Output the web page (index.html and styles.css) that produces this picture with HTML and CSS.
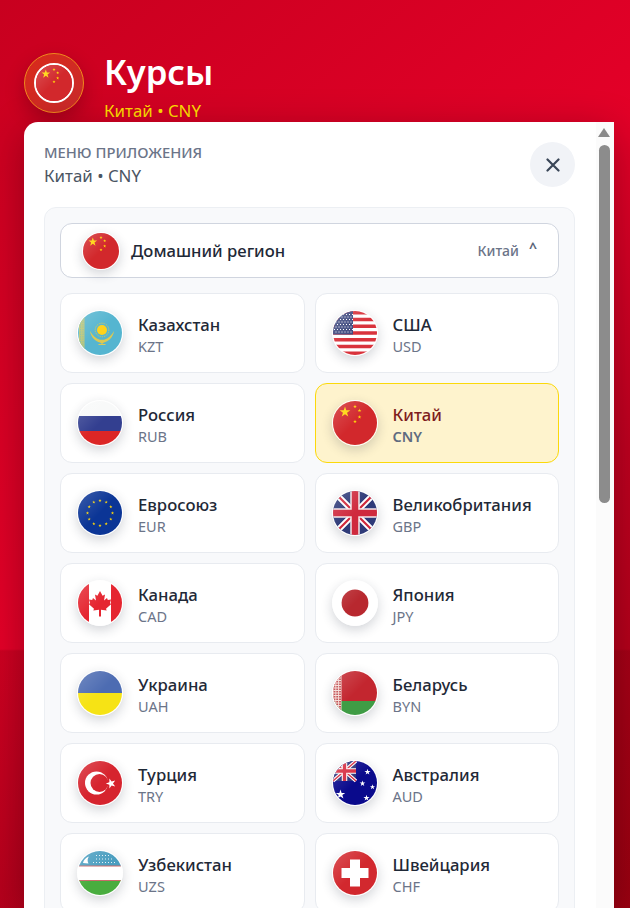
FILE: index.html
```html
<!DOCTYPE html>
<html lang="ru">
<head>
<meta charset="utf-8">
<title>Курсы</title>
<link rel="stylesheet" href="styles.css">
</head>
<body>
<svg class="defs" width="0" height="0" aria-hidden="true">
  <defs>
    <polygon id="st" points="0,-1 .225,-.309 .951,-.309 .363,.118 .588,.809 0,.382 -.588,.809 -.363,.118 -.951,-.309 -.225,-.309"/>
    <symbol id="f-cn" viewBox="0 0 44 44">
      <rect width="44" height="44" fill="#d2282c"/>
      <g fill="#ffd60a">
        <use href="#st" transform="translate(12 11) scale(5.6)"/>
        <use href="#st" transform="translate(22 5.5) scale(2)"/>
        <use href="#st" transform="translate(26.5 9.5) scale(2)"/>
        <use href="#st" transform="translate(26.5 16) scale(2)"/>
        <use href="#st" transform="translate(22 20.5) scale(2)"/>
      </g>
    </symbol>
    <symbol id="f-kz" viewBox="0 0 44 44">
      <rect width="44" height="44" fill="#55b5d0"/>
      <path d="M1 4H6.500V40H1Z" fill="#b9c67a"/>
      <path d="M2.500 6V39M5 6V39" stroke="#7fbcb0" stroke-width=".8" stroke-dasharray="1.200 1.200"/>
      <circle cx="24" cy="19" r="6.800" fill="none" stroke="#e0c94a" stroke-width="1" stroke-dasharray="1 .9"/>
      <circle cx="24" cy="19" r="5" fill="#fed21a"/>
      <path d="M12 20C13 27 18 30.500 22 31.500L24 33L26 31.500C30 30.500 35 27 36 20C33.500 24.500 30.500 27.500 26 28.700H22C17.500 27.500 14.500 24.500 12 20Z" fill="#dcc952"/>
      <path d="M20.500 33.500H27.500" stroke="#dcc952" stroke-width="1.200"/>
    </symbol>
    <symbol id="f-us" viewBox="0 0 44 44">
      <rect width="44" height="44" fill="#fff"/>
      <path d="M0 1.700H44M0 8.500H44M0 15.200H44M0 22H44M0 28.800H44M0 35.500H44M0 42.300H44" stroke="#d9333c" stroke-width="3.400"/>
      <rect width="20" height="23.500" fill="#3f4a80"/>
      <path d="M1 3.500H20M1 8.500H20M1 13.500H20M1 18.500H20" stroke="#fff" stroke-width="1" stroke-dasharray="1 2"/>
      <path d="M2.500 6H20M2.500 11H20M2.500 16H20M2.500 21H20" stroke="#fff" stroke-width="1" stroke-dasharray="1 2"/>
    </symbol>
    <symbol id="f-ru" viewBox="0 0 44 44">
      <rect width="44" height="15" fill="#f8f9f9"/>
      <rect y="15" width="44" height="15" fill="#333f90"/>
      <rect y="30" width="44" height="14" fill="#dc2626"/>
    </symbol>
    <symbol id="f-eu" viewBox="0 0 44 44">
      <rect width="44" height="44" fill="#0b3596"/>
      <g fill="#ffd60a">
        <use href="#st" transform="translate(22 9.500) scale(1.700)"/>
        <use href="#st" transform="translate(28.200 11.200) scale(1.700)"/>
        <use href="#st" transform="translate(32.800 15.800) scale(1.700)"/>
        <use href="#st" transform="translate(34.500 22) scale(1.700)"/>
        <use href="#st" transform="translate(32.800 28.200) scale(1.700)"/>
        <use href="#st" transform="translate(28.200 32.800) scale(1.700)"/>
        <use href="#st" transform="translate(22 34.500) scale(1.700)"/>
        <use href="#st" transform="translate(15.800 32.800) scale(1.700)"/>
        <use href="#st" transform="translate(11.200 28.200) scale(1.700)"/>
        <use href="#st" transform="translate(9.500 22) scale(1.700)"/>
        <use href="#st" transform="translate(11.200 15.800) scale(1.700)"/>
        <use href="#st" transform="translate(15.800 11.200) scale(1.700)"/>
      </g>
    </symbol>
    <symbol id="f-gb" viewBox="0 0 44 44">
      <rect width="44" height="44" fill="#2e3a78"/>
      <path d="M0 0L44 44M44 0L0 44" stroke="#fff" stroke-width="6"/>
      <path d="M0 0L44 44M44 0L0 44" stroke="#d0283c" stroke-width="2.200"/>
      <path d="M22 0V44M0 22H44" stroke="#f4e8ea" stroke-width="9.500"/>
      <path d="M22 0V44M0 22H44" stroke="#cf2a3e" stroke-width="6.500"/>
    </symbol>
    <symbol id="f-ca" viewBox="0 0 44 44">
      <rect width="44" height="44" fill="#fff"/>
      <rect width="11" height="44" fill="#e52530"/>
      <rect x="33" width="11" height="44" fill="#e52530"/>
      <path d="M22 10L24.600 14.800L27 13.500L26 19.500L29 17L29.800 19L33 18.400L32 22.200L33.300 23L28 27.700L28.700 29.600L23 28.800V35.500H21V28.800L15.300 29.600L16 27.700L10.700 23L12 22.200L11 18.400L14.200 19L15 17L18 19.500L17 13.500L19.400 14.800Z" fill="#e52530"/>
    </symbol>
    <symbol id="f-jp" viewBox="0 0 44 44">
      <rect width="44" height="44" fill="#fff"/>
      <circle cx="22" cy="22" r="13.400" fill="#b8282f"/>
    </symbol>
    <symbol id="f-ua" viewBox="0 0 44 44">
      <rect width="44" height="22" fill="#4d6cb2"/>
      <rect y="22" width="44" height="22" fill="#f6e315"/>
    </symbol>
    <symbol id="f-by" viewBox="0 0 44 44">
      <rect width="44" height="30" fill="#c3262f"/>
      <rect y="30" width="44" height="14" fill="#3f9c45"/>
      <rect width="8.500" height="44" fill="#f3dcd8"/>
      <path d="M1.500 0V44M4.200 0V44M7 0V44" stroke="#c0484c" stroke-width="1.800" stroke-dasharray="1.500 1"/>
    </symbol>
    <symbol id="f-tr" viewBox="0 0 44 44">
      <rect width="44" height="44" fill="#d6242e"/>
      <circle cx="18.500" cy="22" r="11.500" fill="#fff"/>
      <circle cx="21.500" cy="22" r="9" fill="#d6242e"/>
      <use href="#st" fill="#fff" transform="translate(33 22.500) rotate(-18) scale(5.200)"/>
    </symbol>
    <symbol id="f-au" viewBox="0 0 44 44">
      <rect width="44" height="44" fill="#0a0a8c"/>
      <rect width="23" height="20" fill="#2b3178"/>
      <path d="M0 0L23 20M23 0L0 20" stroke="#fff" stroke-width="3.600"/>
      <path d="M0 0L23 20M23 0L0 20" stroke="#d62a3e" stroke-width="1.400"/>
      <path d="M11.500 0V20M0 10H23" stroke="#fff" stroke-width="5.500"/>
      <path d="M11.500 0V20M0 10H23" stroke="#d62a3e" stroke-width="3.400"/>
      <g fill="#fff">
        <use href="#st" transform="translate(7.500 33.500) scale(5)"/>
        <use href="#st" transform="translate(34.500 11) scale(3.200)"/>
        <use href="#st" transform="translate(29.500 22.500) scale(3)"/>
        <use href="#st" transform="translate(39.500 26) scale(2.800)"/>
        <use href="#st" transform="translate(33.500 37) scale(3.200)"/>
      </g>
    </symbol>
    <symbol id="f-uz" viewBox="0 0 44 44">
      <rect width="44" height="15" fill="#4b9ec0"/>
      <rect y="15" width="44" height="15" fill="#fff"/>
      <rect y="29" width="44" height="15" fill="#49ad3f"/>
      <path d="M0 15H44M0 29.500H44" stroke="#c96a6a" stroke-width="1.200"/>
      <path d="M5 12C5.500 9 8 6.500 11 5.500C9.500 7.500 9 9.500 10.500 12.500Z" fill="#fff"/>
      <path d="M18 4.500H33M18 8H36M15 11.500H38" stroke="#fff" stroke-width="1.100" stroke-dasharray="1 2" opacity=".85"/>
    </symbol>
    <symbol id="f-ch" viewBox="0 0 44 44">
      <rect width="44" height="44" fill="#d2282e"/>
      <path d="M17 8.500H27V17H35.500V27H27V35.500H17V27H8.500V17H17Z" fill="#fff"/>
    </symbol>
  </defs>
</svg>

<div class="app">
  <header class="top">
    <div class="avatar">
      <span class="flag flag-avatar"><svg><use href="#f-cn"/></svg></span>
    </div>
    <div class="top-text">
      <h1 class="title">Курсы</h1>
      <div class="subtitle">Китай • CNY</div>
    </div>
  </header>

  <main class="panel">
    <div class="panel-body">
      <div class="panel-head">
        <div class="panel-heading">
          <div class="eyebrow">МЕНЮ ПРИЛОЖЕНИЯ</div>
          <div class="current">Китай • CNY</div>
        </div>
        <button class="close" type="button" aria-label="Закрыть">
          <svg width="14" height="14" viewBox="0 0 14 14"><path d="M1.500 1.500L12.500 12.500M12.500 1.500L1.500 12.500" stroke="#3a4657" stroke-width="2.200" stroke-linecap="round"/></svg>
        </button>
      </div>

      <section class="section">
        <div class="region">
          <span class="flag flag-region"><svg><use href="#f-cn"/></svg></span>
          <span class="region-label">Домашний регион</span>
          <span class="region-value">Китай</span>
          <span class="region-caret">^</span>
        </div>

        <div class="grid">
          <div class="card"><span class="flag"><svg><use href="#f-kz"/></svg></span><div><div class="name">Казахстан</div><div class="code">KZT</div></div></div>
          <div class="card"><span class="flag"><svg><use href="#f-us"/></svg></span><div><div class="name">США</div><div class="code">USD</div></div></div>
          <div class="card"><span class="flag"><svg><use href="#f-ru"/></svg></span><div><div class="name">Россия</div><div class="code">RUB</div></div></div>
          <div class="card card-active"><span class="flag"><svg><use href="#f-cn"/></svg></span><div><div class="name">Китай</div><div class="code">CNY</div></div></div>
          <div class="card"><span class="flag"><svg><use href="#f-eu"/></svg></span><div><div class="name">Евросоюз</div><div class="code">EUR</div></div></div>
          <div class="card"><span class="flag"><svg><use href="#f-gb"/></svg></span><div><div class="name">Великобритания</div><div class="code">GBP</div></div></div>
          <div class="card"><span class="flag"><svg><use href="#f-ca"/></svg></span><div><div class="name">Канада</div><div class="code">CAD</div></div></div>
          <div class="card"><span class="flag"><svg><use href="#f-jp"/></svg></span><div><div class="name">Япония</div><div class="code">JPY</div></div></div>
          <div class="card"><span class="flag"><svg><use href="#f-ua"/></svg></span><div><div class="name">Украина</div><div class="code">UAH</div></div></div>
          <div class="card"><span class="flag"><svg><use href="#f-by"/></svg></span><div><div class="name">Беларусь</div><div class="code">BYN</div></div></div>
          <div class="card"><span class="flag"><svg><use href="#f-tr"/></svg></span><div><div class="name">Турция</div><div class="code">TRY</div></div></div>
          <div class="card"><span class="flag"><svg><use href="#f-au"/></svg></span><div><div class="name">Австралия</div><div class="code">AUD</div></div></div>
          <div class="card"><span class="flag"><svg><use href="#f-uz"/></svg></span><div><div class="name">Узбекистан</div><div class="code">UZS</div></div></div>
          <div class="card"><span class="flag"><svg><use href="#f-ch"/></svg></span><div><div class="name">Швейцария</div><div class="code">CHF</div></div></div>
        </div>
      </section>
    </div>

    <div class="scrollbar">
      <span class="scroll-arrow"></span>
      <span class="scroll-thumb"></span>
    </div>
  </main>
</div>
</body>
</html>
```

FILE: styles.css
```css
* { box-sizing: border-box; }

html, body {
  margin: 0;
  height: 100%;
  overflow: hidden;
}

body {
  font-family: "Noto Sans", "Open Sans", sans-serif;
  color: #1f2937;
  background:
    linear-gradient(180deg, transparent 649px, rgba(90, 0, 0, .17) 651px),
    linear-gradient(140deg, #c8001f 0%, #e40028 46%, #c00020 68%, #a80014 100%);
}

.defs { position: absolute; }

.app {
  height: 100vh;
  display: flex;
  flex-direction: column;
  padding: 0 16px 0 24px;
}

.top {
  height: 122px;
  flex: none;
  padding-top: 53px;
  display: flex;
  gap: 20px;
}

.avatar {
  width: 60px;
  height: 60px;
  flex: none;
  border-radius: 50%;
  border: 1px solid #ee8a1c;
  background: linear-gradient(135deg, #d92a1a, #c92a2c);
  box-shadow: 0 8px 20px rgba(0, 0, 0, .22);
  display: flex;
  align-items: center;
  justify-content: center;
}

.top-text { min-width: 0; }

.title {
  margin: -1px 0 0;
  font-size: 34.600px;
  line-height: 40px;
  font-weight: 600;
  color: #fff;
}

.subtitle {
  margin-top: 9px;
  font-size: 16.900px;
  line-height: 20px;
  color: #ffdd00;
}

.panel {
  flex: 1;
  min-height: 0;
  display: flex;
  background: #fff;
  border-radius: 14px 0 0 0;
  overflow: hidden;
  box-shadow: 0 10px 40px rgba(0, 0, 0, .3);
}

.panel-body {
  flex: 1;
  min-width: 0;
  padding: 20px 21px 0 20px;
}

.panel-head {
  display: flex;
  justify-content: space-between;
  align-items: flex-start;
}

.eyebrow {
  font-size: 14.750px;
  line-height: 20px;
  font-weight: 500;
  color: #6b7488;
}

.current {
  margin-top: 2px;
  font-size: 16.900px;
  line-height: 24px;
  color: #4b5563;
}

.close {
  width: 45px;
  height: 45px;
  padding: 0;
  border: 0;
  border-radius: 50%;
  background: #f1f3f7;
  display: flex;
  align-items: center;
  justify-content: center;
}

.section {
  margin-top: 19px;
  padding: 15px;
  background: #f8f9fb;
  border: 1px solid #eceff3;
  border-radius: 12px;
}

.region {
  height: 55px;
  padding: 0 21px;
  display: flex;
  align-items: center;
  background: #fff;
  border: 1px solid #d0d5df;
  border-radius: 12px;
}

.region-label {
  margin-left: 11px;
  font-size: 16.650px;
  font-weight: 500;
  color: #1f2937;
  flex: 1;
}

.region-value {
  font-size: 14px;
  font-weight: 500;
  color: #6b7488;
}

.region-caret {
  margin-left: 10px;
  padding-bottom: 7px;
  font-size: 14px;
  font-weight: 700;
  color: #5b6578;
}

.grid {
  margin-top: 15px;
  display: grid;
  grid-template-columns: 1fr 1fr;
  gap: 10px;
}

.card {
  height: 80px;
  padding: 0 16px;
  display: flex;
  align-items: center;
  gap: 15px;
  background: #fff;
  border: 1px solid #e8ebf0;
  border-radius: 12px;
}

.card-active {
  background: #fef3cd;
  border-color: #fbd90a;
}

.flag {
  position: relative;
  width: 46px;
  height: 46px;
  flex: none;
  border: 1px solid #fff;
  border-radius: 50%;
  overflow: hidden;
  display: block;
  box-shadow: 0 4px 12px rgba(30, 40, 60, .2);
}

.flag svg {
  display: block;
  width: 100%;
  height: 100%;
}

.flag::after {
  content: "";
  position: absolute;
  inset: 0;
  background: linear-gradient(135deg, rgba(255, 255, 255, .2), rgba(255, 255, 255, 0) 50%);
}

.flag-region {
  width: 38px;
  height: 38px;
}

.flag-avatar {
  width: 40px;
  height: 40px;
  border: 2px solid #fff;
  box-shadow: none;
}

.name {
  margin-top: -1px;
  font-size: 16.700px;
  line-height: 27px;
  font-weight: 500;
  color: #1f2937;
}

.code {
  font-size: 14.500px;
  line-height: 16px;
  color: #6b7488;
}

.card-active .name { color: #7f1d1d; }

.card-active .code {
  color: #5f6b80;
  font-weight: 600;
}

.scrollbar {
  width: 18px;
  flex: none;
  background: #fbfbfb;
  padding: 6px 4px 0 2px;
  display: flex;
  flex-direction: column;
  align-items: center;
}

.scroll-arrow {
  width: 0;
  height: 0;
  border-left: 6.500px solid transparent;
  border-right: 6.500px solid transparent;
  border-bottom: 9px solid #8a8a8a;
}

.scroll-thumb {
  margin-top: 8px;
  width: 11px;
  height: 358px;
  border-radius: 6px;
  background: #8c8c8c;
}
```
